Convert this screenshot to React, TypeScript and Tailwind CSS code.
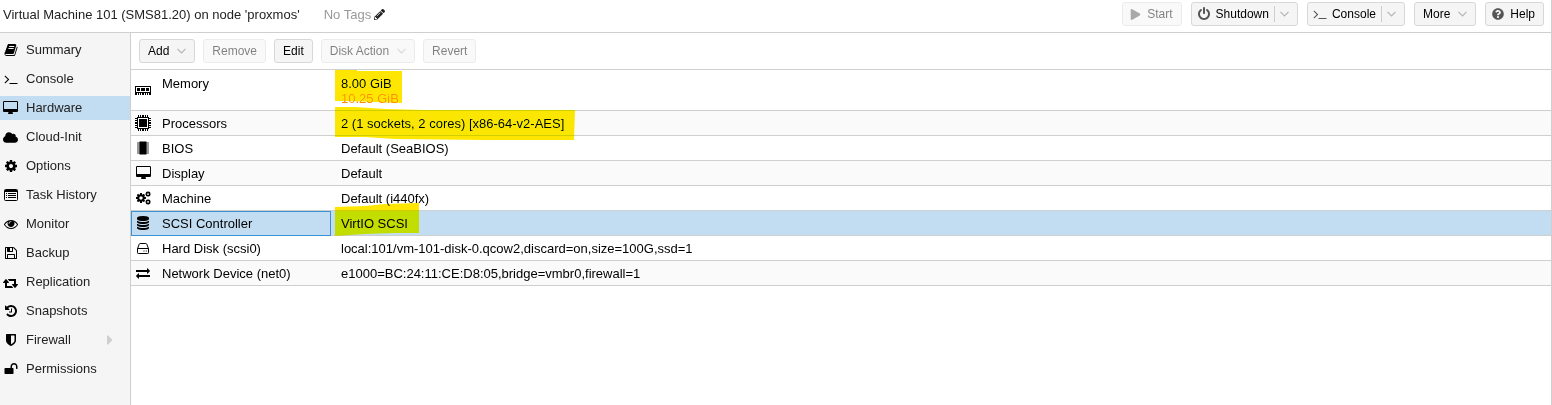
import type { ReactNode } from "react";
import { FaCaretRight, FaCloud, FaPencilAlt, FaPlay, FaQuestionCircle } from "react-icons/fa";

function Glyph({ d, wide, className = "w-[14px] h-[14px]" }: { d: string; wide?: boolean; className?: string }) {
  return (
    <svg viewBox={wide ? "0 0 1920 1792" : "0 0 1792 1792"} className={className} fill="currentColor" aria-hidden="true">
      <path d={d} />
    </svg>
  );
}

const paths = {
  book: "M1703 478q40 57 18 129l-275 906q-19 64-76.5 107.5t-122.5 43.5h-923q-77 0-148.5-53.5t-99.5-131.5q-24-67-2-127 0-4 3-27t4-37q1-8-3-21.5t-3-19.5q2-11 8-21t16.5-23.5 16.5-23.5q23-38 45-91.5t30-91.5q3-10 .5-30t-.5-28q3-11 17-28t17-23q21-36 42-92t25-90q1-9-2.5-32t.5-28q4-13 22-30.5t22-22.5q19-26 42.5-84.5t27.5-96.5q1-8-3-25.5t-2-26.5q2-8 9-18t18-23 17-21q8-12 16.5-30.5t15-35 16-36 19.5-32 26.5-23.5 36-11.5 47.5 5.5l-1 3q38-9 51-9h761q74 0 114 56t18 130l-274 906q-36 119-71.5 153.5t-128.5 34.5h-869q-27 0-38 15-11 16-1 43 24 70 144 70h923q29 0 56-15.5t35-41.5l300-987q7-22 5-57 38 15 59 43zm-1064 2q-4 13 2 22.5t20 9.5h608q13 0 25.5-9.5t16.5-22.5l21-64q4-13-2-22.5t-20-9.5h-608q-13 0-25.5 9.5t-16.5 22.5zm-83 256q-4 13 2 22.5t20 9.5h608q13 0 25.5-9.5t16.5-22.5l21-64q4-13-2-22.5t-20-9.5h-608q-13 0-25.5 9.5t-16.5 22.5z",
  terminal: "M649 983l-466 466q-10 10-23 10t-23-10l-50-50q-10-10-10-23t10-23l393-393-393-393q-10-10-10-23t10-23l50-50q10-10 23-10t23 10l466 466q10 10 10 23t-10 23zm1079 457v64q0 14-9 23t-23 9h-960q-14 0-23-9t-9-23v-64q0-14 9-23t23-9h960q14 0 23 9t9 23z",
  desktop: "M1792 992v-832q0-13-9.5-22.5t-22.5-9.5h-1600q-13 0-22.5 9.5t-9.5 22.5v832q0 13 9.5 22.5t22.5 9.5h1600q13 0 22.5-9.5t9.5-22.5zm128-832v1088q0 66-47 113t-113 47h-544q0 37 16 77.5t32 71 16 43.5q0 26-19 45t-45 19h-512q-26 0-45-19t-19-45q0-14 16-44t32-70 16-78h-544q-66 0-113-47t-47-113v-1088q0-66 47-113t113-47h1600q66 0 113 47t47 113z",
  cog: "M1152 896q0-106-75-181t-181-75-181 75-75 181 75 181 181 75 181-75 75-181zm512-109v222q0 12-8 23t-20 13l-185 28q-19 54-39 91 35 50 107 138 10 12 10 25t-9 23q-27 37-99 108t-94 71q-12 0-26-9l-138-108q-44 23-91 38-16 136-29 186-7 28-36 28h-222q-14 0-24.5-8.5t-11.5-21.5l-28-184q-49-16-90-37l-141 107q-10 9-25 9-14 0-25-11-126-114-165-168-7-10-7-23 0-12 8-23 15-21 51-66.5t54-70.5q-27-50-41-99l-183-27q-13-2-21-12.5t-8-23.5v-222q0-12 8-23t19-13l186-28q14-46 39-92-40-57-107-138-10-12-10-24 0-10 9-23 26-36 98.5-107.5t94.5-71.5q13 0 26 10l138 107q44-23 91-38 16-136 29-186 7-28 36-28h222q14 0 24.5 8.5t11.5 21.5l28 184q49 16 90 37l142-107q9-9 24-9 13 0 25 10 129 119 165 170 7 8 7 22 0 12-8 23-15 21-51 66.5t-54 70.5q26 50 41 98l183 28q13 2 21 12.5t8 23.5z",
  eye: "M1664 960q-152-236-381-353 61 104 61 225 0 185-131.5 316.5t-316.5 131.5-316.5-131.5-131.5-316.5q0-121 61-225-229 117-381 353 133 205 333.5 326.5t434.5 121.5 434.5-121.5 333.5-326.5zm-720-384q0-20-14-34t-34-14q-125 0-214.5 89.5t-89.5 214.5q0 20 14 34t34 14 34-14 14-34q0-86 61-147t147-61q20 0 34-14t14-34zm848 384q0 34-20 69-140 230-376.5 368.5t-499.5 138.5-499.5-139-376.5-368q-20-35-20-69t20-69q140-229 376.5-368t499.5-139 499.5 139 376.5 368q20 35 20 69z",
  floppy: "M512 1536h768v-384h-768v384zm896 0h128v-896q0-14-10-38.5t-20-34.5l-281-281q-10-10-34-20t-39-10v416q0 40-28 68t-68 28h-576q-40 0-68-28t-28-68v-416h-128v1280h128v-416q0-40 28-68t68-28h832q40 0 68 28t28 68v416zm-384-928v-320q0-13-9.5-22.5t-22.5-9.5h-192q-13 0-22.5 9.5t-9.5 22.5v320q0 13 9.5 22.5t22.5 9.5h192q13 0 22.5-9.5t9.5-22.5zm640 32v928q0 40-28 68t-68 28h-1344q-40 0-68-28t-28-68v-1344q0-40 28-68t68-28h928q40 0 88 20t76 48l280 280q28 28 48 76t20 88z",
  retweet: "M1280 1632q0 13-9.5 22.5t-22.5 9.5h-960q-8 0-13.5-2t-9-7-5.5-8-3-11.5-1-11.5v-600h-192q-26 0-45-19t-19-45q0-24 15-41l320-384q19-22 49-22t49 22l320 384q15 17 15 41 0 26-19 45t-45 19h-192v384h576q16 0 25 11l160 192q7 10 7 21zm640-416q0 20-15 41l-320 384q-20 23-49 23t-49-23l-320-384q-15-17-15-41 0-26 19-45t45-19h192v-384h-576q-16 0-25-12l-160-192q-7-9-7-20 0-13 9.5-22.5t22.5-9.5h960q8 0 13.5 2t9 7 5.5 8 3 11.5 1 11.5v600h192q26 0 45 19t19 45z",
  history: "M1664 896q0 156-61 298t-164 245-245 164-298 61q-172 0-327-72.5t-264-204.5q-7-10-6.5-22.5t8.5-20.5l137-138q10-9 25-9 16 2 23 12 73 95 179 147t225 52q104 0 198.5-40.5t163.5-109.5 109.5-163.5 40.5-198.5-40.5-198.5-109.5-163.5-163.5-109.5-198.5-40.5q-98 0-188 35.5t-160 101.5l137 138q31 30 14 69-17 40-59 40h-448q-26 0-45-19t-19-45v-448q0-42 40-59 39-17 69 14l130 129q107-101 244.5-156.5t284.5-55.5q156 0 298 61t245 164 164 245 61 298zm-640-288v448q0 14-9 23t-23 9h-320q-14 0-23-9t-9-23v-64q0-14 9-23t23-9h224v-352q0-14 9-23t23-9h64q14 0 23 9t9 23z",
  shield: "M1344 960v-640h-448v1137q119-63 213-137 235-184 235-360zm192-768v768q0 86-33.5 170.5t-83 150-118 127.5-126.5 103-121 77.5-89.5 49.5-42.5 20q-12 6-26 6t-26-6q-16-7-42.5-20t-89.5-49.5-121-77.5-126.5-103-118-127.5-83-150-33.5-170.5v-768q0-26 19-45t45-19h1152q26 0 45 19t19 45z",
  unlock: "M1728 576v256q0 26-19 45t-45 19h-64q-26 0-45-19t-19-45v-256q0-106-75-181t-181-75-181 75-75 181v192h96q40 0 68 28t28 68v576q0 40-28 68t-68 28h-960q-40 0-68-28t-28-68v-576q0-40 28-68t68-28h672v-192q0-185 131.5-316.5t316.5-131.5 316.5 131.5 131.5 316.5z",
  power: "M1664 896q0 156-61 298t-164 245-245 164-298 61-298-61-245-164-164-245-61-298q0-182 80.5-343t226.5-270q43-32 95.5-25t83.5 50q32 42 24.5 94.5t-49.5 84.5q-98 74-151.5 181t-53.5 228q0 104 40.5 198.5t109.5 163.5 163.5 109.5 198.5 40.5 198.5-40.5 163.5-109.5 109.5-163.5 40.5-198.5q0-121-53.5-228t-151.5-181q-42-32-49.5-84.5t24.5-94.5q31-43 84-50t95 25q146 109 226.5 270t80.5 343zm-640-768v640q0 52-38 90t-90 38-90-38-38-90v-640q0-52 38-90t90-38 90 38 38 90z",
  database: "M896 768q237 0 443-43t325-127v170q0 69-103 128t-280 93.5-385 34.5-385-34.5-280-93.5-103-128v-170q119 84 325 127t443 43zm0 768q237 0 443-43t325-127v170q0 69-103 128t-280 93.5-385 34.5-385-34.5-280-93.5-103-128v-170q119 84 325 127t443 43zm0-384q237 0 443-43t325-127v170q0 69-103 128t-280 93.5-385 34.5-385-34.5-280-93.5-103-128v-170q119 84 325 127t443 43zm0-1152q208 0 385 34.5t280 93.5 103 128v128q0 69-103 128t-280 93.5-385 34.5-385-34.5-280-93.5-103-128v-128q0-69 103-128t280-93.5 385-34.5z",
  exchange: "M1792 1184v192q0 13-9.5 22.5t-22.5 9.5h-1376v192q0 13-9.5 22.5t-22.5 9.5q-12 0-24-10l-319-320q-9-9-9-22 0-14 9-23l320-320q9-9 23-9 13 0 22.5 9.5t9.5 22.5v192h1376q13 0 22.5 9.5t9.5 22.5zm0-544q0 14-9 23l-320 320q-9 9-23 9-13 0-22.5-9.5t-9.5-22.5v-192h-1376q-13 0-22.5-9.5t-9.5-22.5v-192q0-13 9.5-22.5t22.5-9.5h1376v-192q0-14 9-23t23-9q12 0 24 10l319 319q9 9 9 23z",
};

function MemoryIcon() {
  return (
    <svg viewBox="0 0 16 16" className="w-4 h-4" shapeRendering="crispEdges" aria-hidden="true">
      <path d="M0 4h16v7H0z" />
      <path d="M1 5h14v5H1z" fill="#fff" />
      <path d="M2 6h3v3H2zM6 6h4v3H6zM11 6h3v3h-3zM0 11h2v2H0zM3 11h1v2H3zM5 11h1v2H5zM7 11h2v2H7zM10 11h1v2h-1zM12 11h1v2h-1zM14 11h2v2h-2z" />
    </svg>
  );
}

function CpuIcon() {
  return (
    <svg viewBox="0 0 16 16" className="w-4 h-4" shapeRendering="crispEdges" aria-hidden="true">
      <path d="M2 2h12v12H2z" />
      <path d="M3 3h10v10H3z" fill="#fff" />
      <path d="M4 4h8v8H4zM3 0h1v2H3zM5 0h1v2H5zM7 0h2v2H7zM10 0h1v2h-1zM12 0h1v2h-1zM3 14h1v2H3zM5 14h1v2H5zM7 14h2v2H7zM10 14h1v2h-1zM12 14h1v2h-1zM0 3h2v1H0zM0 5h2v1H0zM0 7h2v2H0zM0 10h2v1H0zM0 12h2v1H0zM14 3h2v1h-2zM14 5h2v1h-2zM14 7h2v2h-2zM14 10h2v1h-2zM14 12h2v1h-2z" />
    </svg>
  );
}

function ChipIcon() {
  return (
    <svg viewBox="0 0 16 16" className="w-4 h-4" aria-hidden="true">
      <path d="M4.500 1.500h7v13h-7z" />
      <path d="M2 3h12M2 5h12M2 7h12M2 9h12M2 11h12M2 13h12" stroke="#000" strokeWidth=".8" />
    </svg>
  );
}

function DriveIcon() {
  return (
    <svg viewBox="0 0 16 16" className="w-4 h-4" fill="none" stroke="#000" strokeWidth="1" aria-hidden="true">
      <path d="M2.500 8.500h11v4.200a.8.8 0 0 1-.8.8H3.300a.8.8 0 0 1-.8-.8zM2.500 8.700L4.200 4.200q.3-.7 1-.7h5.600q.7 0 1 .7l1.700 4.500" />
      <path d="M8.500 11h1M10.800 11h1" strokeWidth="1.200" />
    </svg>
  );
}

function ListIcon() {
  return (
    <svg viewBox="0 0 14 12" className="w-[14px] h-[12px]" aria-hidden="true">
      <rect x=".5" y=".5" width="13" height="11" rx="1" fill="none" stroke="#000" />
      <path d="M1 1h12v2H1zM2 4h1v1H2zM2 6h1v1H2zM2 8h1v1H2zM4 4h8v1H4zM4 6h8v1H4zM4 8h8v1H4z" />
    </svg>
  );
}

function CogsIcon() {
  return (
    <svg viewBox="0 0 1920 1792" className="h-[14px] w-[15px]" aria-hidden="true">
      <path d={paths.cog} transform="translate(-107 149) scale(.83)" />
      <path d={paths.cog} transform="translate(1130 -20) scale(.46)" />
      <path d={paths.cog} transform="translate(1130 985) scale(.46)" />
    </svg>
  );
}

function Chevron({ className = "" }: { className?: string }) {
  return (
    <svg viewBox="0 0 9 6" className={`w-[9px] h-[6px] ${className}`} fill="none" stroke="#b5b5b5" strokeWidth="1.200" aria-hidden="true">
      <path d="M.5.8L4.500 4.800 8.500.8" />
    </svg>
  );
}

interface ToolButtonProps {
  children: ReactNode;
  icon?: ReactNode;
  menu?: boolean;
  split?: boolean;
  disabled?: boolean;
}

function ToolButton({ children, icon, menu, split, disabled }: ToolButtonProps) {
  const pad = icon ? "pl-[5px]" : "pl-2";
  return (
    <button
      type="button"
      disabled={disabled}
      className={`flex h-6 items-center rounded-[3px] border border-[#d8d8d8] bg-[#f5f5f5] pr-2 text-xs text-black disabled:opacity-50 ${pad}`}
    >
      {icon && <span className="mr-[5px] flex w-[14px] justify-center text-[#555]">{icon}</span>}
      {children}
      {split && <span className="ml-[5px] h-4 border-l border-[#cfcfcf]" />}
      {(menu || split) && <Chevron className={split ? "ml-[5px]" : "ml-2"} />}
    </button>
  );
}

const navItems = [
  { label: "Summary", icon: <Glyph d={paths.book} /> },
  { label: "Console", icon: <Glyph d={paths.terminal} /> },
  { label: "Hardware", icon: <Glyph d={paths.desktop} wide className="w-[15px] h-[14px]" />, active: true },
  { label: "Cloud-Init", icon: <FaCloud size={15} /> },
  { label: "Options", icon: <Glyph d={paths.cog} /> },
  { label: "Task History", icon: <ListIcon /> },
  { label: "Monitor", icon: <Glyph d={paths.eye} /> },
  { label: "Backup", icon: <Glyph d={paths.floppy} /> },
  { label: "Replication", icon: <Glyph d={paths.retweet} wide className="w-[15px] h-[14px]" /> },
  { label: "Snapshots", icon: <Glyph d={paths.history} /> },
  { label: "Firewall", icon: <Glyph d={paths.shield} />, expandable: true },
  { label: "Permissions", icon: <Glyph d={paths.unlock} /> },
];

// Marker stroke laid over a value cell
function Marker({ className, width, height, points }: { className: string; width: number; height: number; points: string }) {
  return (
    <svg
      width={width}
      height={height}
      className={`pointer-events-none absolute left-1 mix-blend-darken ${className}`}
      aria-hidden="true"
    >
      <polygon points={points} fill="#ffe600" />
    </svg>
  );
}

const hardware = [
  {
    label: "Memory",
    icon: <MemoryIcon />,
    value: "8.00 GiB",
    pending: "10.25 GiB",
    marker: <Marker className="top-0" width={67} height={34} points="0,0 22,0 22,1 67,1 67,33 14,31 0,31" />,
  },
  {
    label: "Processors",
    icon: <CpuIcon />,
    value: "2 (1 sockets, 2 cores) [x86-64-v2-AES]",
    marker: <Marker className="-top-1" width={240} height={34} points="0,0 20,0 50,2 90,3 240,3 239,33 150,33 60,32 30,30 0,30" />,
  },
  { label: "BIOS", icon: <ChipIcon />, value: "Default (SeaBIOS)" },
  { label: "Display", icon: <Glyph d={paths.desktop} wide className="w-[15px] h-[14px]" />, value: "Default" },
  { label: "Machine", icon: <CogsIcon />, value: "Default (i440fx)" },
  {
    label: "SCSI Controller",
    icon: <Glyph d={paths.database} />,
    value: "VirtIO SCSI",
    selected: true,
    marker: <Marker className="-top-2" width={84} height={34} points="0,4 30,3 50,1 84,0 84,30 60,30 30,31 0,33" />,
  },
  { label: "Hard Disk (scsi0)", icon: <DriveIcon />, value: "local:101/vm-101-disk-0.qcow2,discard=on,size=100G,ssd=1" },
  { label: "Network Device (net0)", icon: <Glyph d={paths.exchange} />, value: "e1000=BC:24:11:CE:D8:05,bridge=vmbr0,firewall=1" },
];

export default function App() {
  return (
    <div className="flex min-h-screen flex-col border-r border-[#cfcfcf] bg-white font-['Liberation_Sans',Arial,sans-serif] text-[13px] leading-[15px] text-black">
      <header className="flex h-[33px] items-center border-b border-[#cfcfcf] pr-[7px] pb-1 pl-[3px]">
        <h1 className="text-[#222]">Virtual Machine 101 (SMS81.20) on node 'proxmos'</h1>
        <div className="ml-6 flex items-center gap-[3px] text-[#999]">
          No Tags
          <button type="button" aria-label="Edit tags" className="text-[#222]">
            <FaPencilAlt size={11} />
          </button>
        </div>
        <div className="ml-auto flex gap-[9px]">
          <ToolButton icon={<FaPlay size={11} />} disabled>Start</ToolButton>
          <ToolButton icon={<Glyph d={paths.power} />} split>Shutdown</ToolButton>
          <ToolButton icon={<Glyph d={paths.terminal} />} split>Console</ToolButton>
          <ToolButton menu>More</ToolButton>
          <ToolButton icon={<FaQuestionCircle size={12} />}>Help</ToolButton>
        </div>
      </header>

      <div className="flex flex-1">
        <nav className="flex w-[131px] shrink-0 flex-col gap-[5px] border-r border-[#cfcfcf] bg-[#f5f5f5] pt-[5px]">
          {navItems.map((item) => (
            <a
              key={item.label}
              href="#"
              className={`flex h-6 items-center pl-[3px] text-[#222] ${item.active ? "bg-[#c2ddf2]" : ""}`}
            >
              <span className="mr-2 flex w-[15px] justify-center text-black">{item.icon}</span>
              <span className="pb-0.5">{item.label}</span>
              {item.expandable && <FaCaretRight size={16} className="mr-3 ml-auto text-[#cfcfcf]" />}
            </a>
          ))}
        </nav>

        <main className="min-w-0 flex-1">
          <div className="flex h-[37px] items-center gap-2 border-b border-[#cfcfcf] pl-2">
            <ToolButton menu>Add</ToolButton>
            <ToolButton disabled>Remove</ToolButton>
            <ToolButton>Edit</ToolButton>
            <ToolButton menu disabled>Disk Action</ToolButton>
            <ToolButton disabled>Revert</ToolButton>
          </div>

          <table className="w-full table-fixed border-separate border-spacing-0">
            <colgroup>
              <col className="w-[200px]" />
              <col />
            </colgroup>
            <tbody>
              {hardware.map((row) => (
                <tr key={row.label} className={row.selected ? "bg-[#c2ddf2]" : "even:bg-[#fafafa]"}>
                  <th
                    scope="row"
                    className={`border-b border-[#cfcfcf] p-0 text-left font-normal ${row.pending ? "h-[41px] pt-[6px] align-top" : "h-[25px]"} ${row.selected ? "outline outline-1 -outline-offset-1 outline-[#3892d4]" : ""}`}
                  >
                    <div className={`flex pl-1 ${row.pending ? "items-start" : "items-center"}`}>
                      <span className={`mr-[11px] flex w-4 justify-center ${row.pending ? "pt-[6px]" : ""}`}>{row.icon}</span>
                      {row.label}
                    </div>
                  </th>
                  <td className={`relative border-b border-[#cfcfcf] p-0 pl-[10px] ${row.pending ? "pt-[6px] align-top" : ""}`}>
                    {row.value}
                    {row.pending && <div className="text-[#ff8c00]">{row.pending}</div>}
                    {row.marker}
                  </td>
                </tr>
              ))}
            </tbody>
          </table>
        </main>
      </div>
    </div>
  );
}
